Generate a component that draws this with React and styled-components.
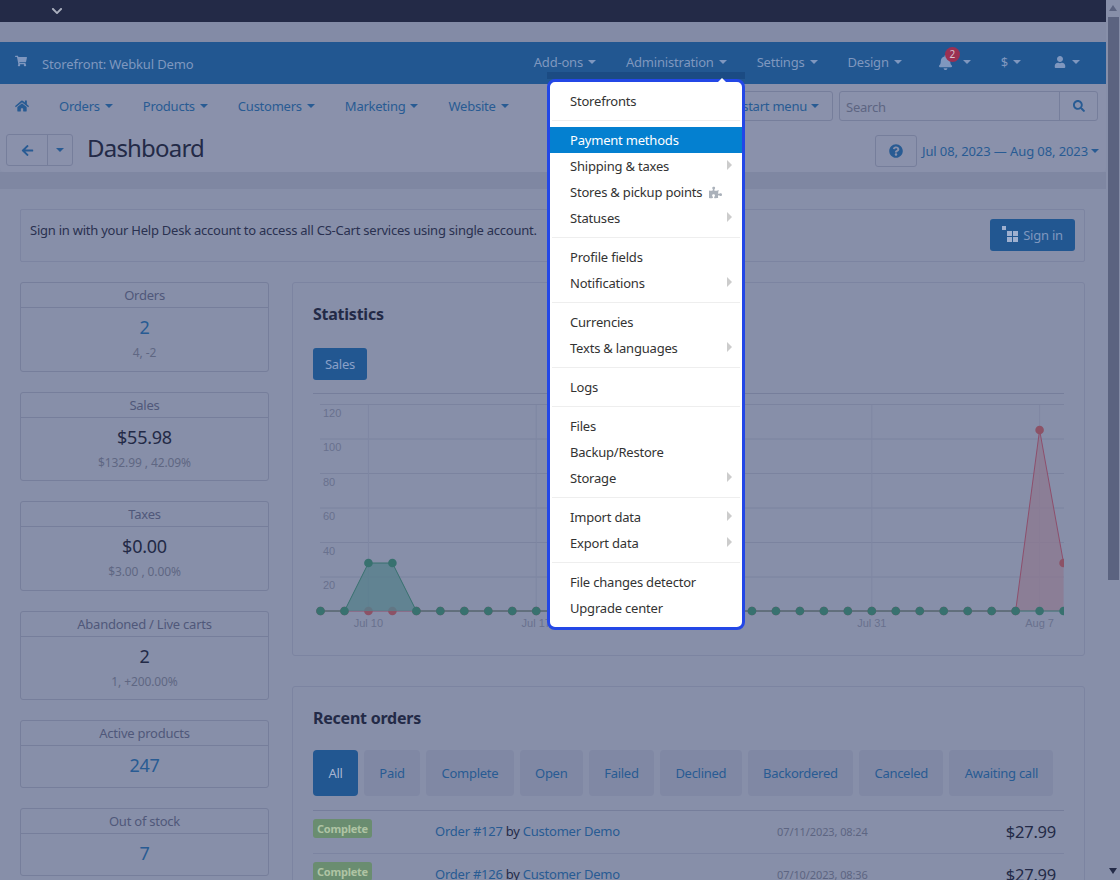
import React from 'react';
import styled, { createGlobalStyle } from 'styled-components';
import {
  FaArrowLeft, FaBell, FaChevronDown, FaHome, FaPuzzlePiece, FaQuestionCircle,
  FaSearch, FaShoppingCart, FaUser,
} from 'react-icons/fa';

const GlobalStyle = createGlobalStyle`
  html, body {
    margin: 0;
    height: 880px;
    overflow: hidden;
    background: #878fa9;
  }
  body, button, input {
    font-family: "Noto Sans", "Open Sans", sans-serif;
    font-size: 13px;
    letter-spacing: -0.24px;
  }
  * { box-sizing: border-box; }
`;

const Shell = styled.div`
  display: flex;
  height: 880px;
  overflow: hidden;
`;

const Page = styled.div`
  flex: 1;
  min-width: 0;
  overflow: hidden;
`;

const TopStrip = styled.div`
  height: 22px;
  padding-left: 51px;
  display: flex;
  align-items: center;
  background: #232a47;
  color: #a9aebd;
  font-size: 12px;
`;

const HeaderGap = styled.div`
  height: 20px;
  background: #838ba6;
`;

const BlueBar = styled.div`
  height: 42px;
  display: flex;
  align-items: center;
  padding: 0 26px 0 15px;
  background: #225791;
  color: #7f97bf;
`;

const Storefront = styled.div`
  display: flex;
  align-items: center;
  gap: 15px;
  margin-right: auto;
  letter-spacing: -0.15px;
  & > span { padding-top: 2px; }
  & > svg { margin-top: -5px; }
`;

const BarNav = styled.nav`
  display: flex;
  align-items: center;
  gap: 30px;
  margin-top: -2px;
  letter-spacing: -0.2px;
`;

const BarItem = styled.div`
  position: relative;
  display: flex;
  align-items: center;
  gap: 5px;
  margin-right: ${p => p.$extra || 0}px;
`;

const Caret = styled.i`
  display: inline-block;
  width: 0;
  height: 0;
  border-left: 4px solid transparent;
  border-right: 4px solid transparent;
  border-top: 4px solid currentColor;
  margin-left: ${p => p.$gap || 0}px;
`;

const CountBadge = styled.b`
  position: absolute;
  top: -8px;
  left: 7px;
  width: 15px;
  height: 15px;
  border-radius: 50%;
  background: #9a3052;
  color: #d8c4cf;
  font-size: 10px;
  font-weight: 400;
  text-align: center;
  line-height: 15px;
`;

const SubNav = styled.div`
  height: 44px;
  display: flex;
  align-items: center;
  padding: 0 8px 0 15px;
  background: #8a91ab;
  color: #285b93;
`;

const SubLinks = styled.nav`
  display: flex;
  align-items: center;
  gap: 30px;
  margin-right: auto;
`;

const SubItem = styled.div`
  display: flex;
  align-items: center;
  gap: 5px;
`;

const QuickButton = styled.div`
  height: 30px;
  display: flex;
  align-items: center;
  gap: 4px;
  padding: 0 13px;
  border: 1px solid #767e9b;
  border-radius: 3px;
  margin-right: 6px;
`;

const SearchBox = styled.div`
  width: 259px;
  height: 30px;
  display: flex;
  border: 1px solid #767e9b;
  border-radius: 3px;
`;

const SearchInput = styled.input`
  flex: 1;
  min-width: 0;
  border: 0;
  padding: 1px 6px 0;
  background: transparent;
  &::placeholder { color: #5d6582; opacity: 1; }
`;

const SearchButton = styled.div`
  width: 38px;
  display: flex;
  align-items: center;
  justify-content: center;
  border-left: 1px solid #767e9b;
  color: #285b93;
`;

const TitleRow = styled.div`
  height: 44px;
  display: flex;
  padding: 6px 7px 0 6px;
  background: #8a91ab;
  border-radius: 0 0 4px 4px;
`;

const BackGroup = styled.div`
  width: 67px;
  height: 32px;
  display: flex;
  border: 1px solid #767e9b;
  border-radius: 3px;
  color: #285b93;
`;

const BackPart = styled.div`
  flex: ${p => p.$grow || 0} 0 25px;
  display: flex;
  align-items: center;
  justify-content: center;
  & + & { border-left: 1px solid #767e9b; }
`;

const PageTitle = styled.h1`
  margin: 0 auto 0 14px;
  font-size: 24px;
  font-weight: 400;
  letter-spacing: -0.8px;
  line-height: 27px;
  color: #232a47;
`;

const HelpButton = styled.div`
  width: 42px;
  height: 32px;
  margin: 1px 5px 0 0;
  display: flex;
  align-items: center;
  justify-content: center;
  border: 1px solid #767e9b;
  border-radius: 3px;
  color: #285b93;
`;

const DateRange = styled.div`
  display: flex;
  align-items: center;
  gap: 3px;
  height: 32px;
  margin-top: 1px;
  letter-spacing: -0.1px;
  color: #285b93;
`;

const Band = styled.div`
  height: 17px;
  background: #7f87a2;
`;

const Main = styled.main`
  padding: 20px 21px 20px 20px;
  background: #878fa9;
`;

const Notice = styled.div`
  height: 53px;
  display: flex;
  align-items: center;
  justify-content: space-between;
  padding: 0 9px;
  border: 1px solid #7c84a1;
  border-radius: 2px;
  margin-bottom: 20px;
  color: #2a3150;
`;

const NoticeText = styled.span`
  padding-bottom: 11px;
`;

const SignIn = styled.div`
  width: 85px;
  height: 32px;
  margin-top: -1px;
  display: flex;
  align-items: center;
  justify-content: center;
  gap: 3px;
  background: #225791;
  border-radius: 3px;
  color: #7f97bf;
`;

const Columns = styled.div`
  display: flex;
  align-items: flex-start;
  gap: 23px;
`;

const LeftColumn = styled.aside`
  width: 249px;
  flex: none;
  display: flex;
  flex-direction: column;
  gap: 20px;
`;

const RightColumn = styled.div`
  flex: 1;
  min-width: 0;
  display: flex;
  flex-direction: column;
  gap: 30px;
`;

const Card = styled.section`
  border: 1px solid #767e9b;
  border-radius: 3px;
  text-align: center;
`;

const CardHead = styled.div`
  height: 25px;
  line-height: 24px;
  border-bottom: 1px solid #767e9b;
  color: #50587a;
`;

const CardBody = styled.div`
  height: ${p => (p.$short ? 41 : 62.5)}px;
  padding-top: 6px;
`;

const CardValue = styled.div`
  font-size: 18px;
  line-height: 26px;
  color: ${p => (p.$link ? '#285b93' : '#232a47')};
`;

const CardSub = styled.div`
  margin-top: 4px;
  font-size: 12px;
  letter-spacing: -0.1px;
  line-height: 17px;
  color: #5f6783;
`;

const Panel = styled.section`
  padding: 20px;
  border: 1px solid #7c84a1;
  border-radius: 3px;
`;

const PanelTitle = styled.h2`
  margin: 0 0 21px;
  font-size: 16px;
  font-weight: 700;
  line-height: 22px;
  color: #232a47;
`;

const SalesButton = styled.div`
  width: 54px;
  height: 32px;
  margin: 23px 0 13px;
  display: flex;
  align-items: center;
  justify-content: center;
  background: #225791;
  border-radius: 3px;
  color: #8aa0c8;
`;

const ChartBox = styled.div`
  border-top: 1px solid #767e9b;
  height: 242px;
  & > svg { display: block; }
`;

const ChartLabel = styled.text`
  font-family: "Liberation Sans", sans-serif;
  font-size: 11px;
  letter-spacing: 0;
  fill: #69718e;
`;

const Tabs = styled.div`
  display: flex;
  gap: 6px;
  padding-bottom: 14px;
  border-bottom: 1px solid #767e9b;
`;

const Tab = styled.div`
  height: 46px;
  display: flex;
  align-items: center;
  padding: 0 15.4px;
  border-radius: 4px;
  letter-spacing: -0.28px;
  background: ${p => (p.$active ? '#225791' : '#8088a4')};
  color: ${p => (p.$active ? '#a6b4d0' : '#285b93')};
`;

const OrderRow = styled.div`
  height: 43px;
  display: grid;
  grid-template-columns: 122px 342px 1fr auto;
  align-items: center;
  padding: 0 8px 2px 0;
  border-bottom: 1px solid #7c84a1;
  color: #232a47;
`;

const StatusBadge = styled.span`
  justify-self: start;
  align-self: start;
  margin-top: 8px;
  width: 59px;
  height: 19px;
  border-radius: 3px;
  background: #6a8d70;
  color: #afc4a4;
  font-size: 11px;
  font-weight: 700;
  text-align: center;
  line-height: 19px;
`;

const OrderLink = styled.span`
  color: #285b93;
`;

const OrderDate = styled.span`
  font-size: 11px;
  letter-spacing: -0.1px;
  color: #5d6582;
`;

const Price = styled.span`
  font-size: 16.5px;
  color: #232a47;
`;

const Scrollbar = styled.div`
  width: 14px;
  flex: none;
  display: flex;
  flex-direction: column;
  align-items: center;
  background: #878fa9;
`;

const ScrollArrow = styled.i`
  flex: none;
  width: 0;
  height: 0;
  margin: 5px 0 6px;
  border-left: 4px solid transparent;
  border-right: 4px solid transparent;
  ${p => (p.$down ? 'border-top: 6px solid #232a47; margin-top: auto;' : 'border-bottom: 6px solid #5b6380;')}
`;

const ScrollThumb = styled.div`
  width: 11px;
  height: 563px;
  background: #5b6380;
`;

const Menu = styled.div`
  position: absolute;
  top: 79px;
  left: 547px;
  width: 198px;
  padding: 6px 0;
  background: #fff;
  border: 3px solid #2347e6;
  border-radius: 8px;
  color: #333;
  letter-spacing: -0.2px;
  &::before {
    content: "";
    position: absolute;
    top: -10px;
    left: -3px;
    right: -3px;
    height: 7px;
    background: #1b4b83;
  }
  &::after {
    content: "";
    position: absolute;
    top: -4px;
    left: 168px;
    border-left: 4px solid transparent;
    border-right: 4px solid transparent;
    border-bottom: 4px solid #fff;
  }
`;

const MenuItem = styled.div`
  height: 26px;
  display: flex;
  align-items: center;
  gap: 7px;
  padding: 0 10px 0 20px;
  background: ${p => (p.$active ? '#0480d0' : 'transparent')};
  color: ${p => (p.$active ? '#fff' : '#333')};
`;

const SubArrow = styled.i`
  margin-left: auto;
  margin-top: -2px;
  border-top: 5px solid transparent;
  border-bottom: 5px solid transparent;
  border-left: 5px solid #ccc;
`;

const MenuDivider = styled.div`
  height: 1px;
  margin: 6px 2px;
  background: #eee;
`;

const menuGroups = [
  [{ label: 'Storefronts' }],
  [
    { label: 'Payment methods', active: true },
    { label: 'Shipping & taxes', sub: true },
    { label: 'Stores & pickup points', addon: true },
    { label: 'Statuses', sub: true },
  ],
  [{ label: 'Profile fields' }, { label: 'Notifications', sub: true }],
  [{ label: 'Currencies' }, { label: 'Texts & languages', sub: true }],
  [{ label: 'Logs' }],
  [{ label: 'Files' }, { label: 'Backup/Restore' }, { label: 'Storage', sub: true }],
  [{ label: 'Import data', sub: true }, { label: 'Export data', sub: true }],
  [{ label: 'File changes detector' }, { label: 'Upgrade center' }],
];

const barLinks = [
  { label: 'Add-ons' },
  { label: 'Administration' },
  { label: 'Settings' },
  { label: 'Design', extra: 6 },
];
const subLinks = ['Orders', 'Products', 'Customers', 'Marketing', 'Website'];
const tabs = ['All', 'Paid', 'Complete', 'Open', 'Failed', 'Declined', 'Backordered', 'Canceled', 'Awaiting call'];

const stats = [
  { title: 'Orders', value: '2', sub: '4, -2', link: true },
  { title: 'Sales', value: '$55.98', sub: '$132.99 , 42.09%' },
  { title: 'Taxes', value: '$0.00', sub: '$3.00 , 0.00%' },
  { title: 'Abandoned / Live carts', value: '2', sub: '1, +200.00%' },
  { title: 'Active products', value: '247', link: true },
  { title: 'Out of stock', value: '7', link: true },
];

const orders = [
  { id: 127, date: '07/11/2023, 08:24' },
  { id: 126, date: '07/10/2023, 08:36' },
];

const BASE = 611;
const px = i => 320.5 + i * 23.97;
const green = Array.from({ length: 32 }, (_, i) => (i === 2 || i === 3 ? 563 : BASE));
const red = Array.from({ length: 32 }, (_, i) => (i === 30 ? 430 : i === 31 ? 563 : BASE));
const toLine = ys => ys.map((y, i) => `${px(i)},${y}`).join(' ');

function Chart() {
  return (
    <svg width="751" height="241" viewBox="313 394 751 241">
      {[404.5, 439, 473.5, 508, 542.5, 577].map(y => (
        <line key={y} x1="320" x2="1064" y1={y} y2={y} stroke="#7b839f" />
      ))}
      {[2, 9, 16, 23, 30].map(i => (
        <line key={i} x1={px(i)} x2={px(i)} y1="405" y2="611" stroke="#7f87a3" />
      ))}
      {[['120', 417], ['100', 451], ['80', 486], ['60', 520], ['40', 555], ['20', 589]].map(([t, y]) => (
        <ChartLabel key={t} x="323" y={y}>{t}</ChartLabel>
      ))}
      {[['Jul 10', 2], ['Jul 17', 9], ['Jul 31', 23], ['Aug 7', 30]].map(([t, i]) => (
        <ChartLabel key={t} x={px(i)} y="627" textAnchor="middle">{t}</ChartLabel>
      ))}
      <polygon points={`${px(29)},${BASE} ${px(30)},430 ${px(31)},563 ${px(31)},${BASE}`} fill="#8c7890" fillOpacity="0.75" />
      <polyline points={toLine(red)} fill="none" stroke="#8e4f6c" />
      {red.map((y, i) => <circle key={i} cx={px(i)} cy={y} r="4.3" fill="#8c5266" />)}
      <polygon points={`${px(1)},${BASE} ${px(2)},563 ${px(3)},563 ${px(4)},${BASE}`} fill="#58808c" fillOpacity="0.8" />
      <polyline points={toLine(green)} fill="none" stroke="#38716f" />
      {green.map((y, i) => <circle key={i} cx={px(i)} cy={y} r="4.3" fill="#38716f" />)}
    </svg>
  );
}

function SignInIcon() {
  return (
    <svg width="18" height="18" viewBox="0 0 18 18" fill="#9fb0cf">
      <rect x="0" y="0" width="4" height="4" />
      <rect x="5" y="5" width="5" height="5" />
      <rect x="11" y="5" width="5" height="5" />
      <rect x="5" y="11" width="5" height="5" />
      <rect x="11" y="11" width="5" height="5" />
    </svg>
  );
}

export default function App() {
  return (
    <>
      <GlobalStyle />
      <Shell>
        <Page>
          <TopStrip><FaChevronDown /></TopStrip>
          <HeaderGap />
          <BlueBar>
            <Storefront>
              <FaShoppingCart size={12} />
              <span>Storefront: Webkul Demo</span>
            </Storefront>
            <BarNav>
              {barLinks.map(link => (
                <BarItem key={link.label} $extra={link.extra}>{link.label}<Caret /></BarItem>
              ))}
              <BarItem>
                <FaBell size={15} />
                <CountBadge>2</CountBadge>
                <Caret $gap={5} />
              </BarItem>
              <BarItem $extra={3}>$<Caret /></BarItem>
              <BarItem><FaUser size={12} /><Caret $gap={1} /></BarItem>
            </BarNav>
          </BlueBar>
          <SubNav>
            <SubLinks>
              <FaHome size={14} />
              {subLinks.map(link => (
                <SubItem key={link}>{link}<Caret /></SubItem>
              ))}
            </SubLinks>
            <QuickButton>Quick start menu<Caret /></QuickButton>
            <SearchBox>
              <SearchInput placeholder="Search" readOnly />
              <SearchButton><FaSearch size={12} /></SearchButton>
            </SearchBox>
          </SubNav>
          <TitleRow>
            <BackGroup>
              <BackPart $grow={1}><FaArrowLeft size={13} /></BackPart>
              <BackPart><Caret /></BackPart>
            </BackGroup>
            <PageTitle>Dashboard</PageTitle>
            <HelpButton><FaQuestionCircle size={14} /></HelpButton>
            <DateRange>Jul 08, 2023 — Aug 08, 2023<Caret /></DateRange>
          </TitleRow>
          <Band />
          <Main>
            <Notice>
              <NoticeText>Sign in with your Help Desk account to access all CS-Cart services using single account.</NoticeText>
              <SignIn><SignInIcon />Sign in</SignIn>
            </Notice>
            <Columns>
              <LeftColumn>
                {stats.map(s => (
                  <Card key={s.title}>
                    <CardHead>{s.title}</CardHead>
                    <CardBody $short={!s.sub}>
                      <CardValue $link={s.link}>{s.value}</CardValue>
                      {s.sub && <CardSub>{s.sub}</CardSub>}
                    </CardBody>
                  </Card>
                ))}
              </LeftColumn>
              <RightColumn>
                <Panel>
                  <PanelTitle>Statistics</PanelTitle>
                  <SalesButton>Sales</SalesButton>
                  <ChartBox><Chart /></ChartBox>
                </Panel>
                <Panel>
                  <PanelTitle>Recent orders</PanelTitle>
                  <Tabs>
                    {tabs.map((t, i) => <Tab key={t} $active={i === 0}>{t}</Tab>)}
                  </Tabs>
                  {orders.map(o => (
                    <OrderRow key={o.id}>
                      <StatusBadge>Complete</StatusBadge>
                      <span>
                        <OrderLink>Order #{o.id}</OrderLink> by <OrderLink>Customer Demo</OrderLink>
                      </span>
                      <OrderDate>{o.date}</OrderDate>
                      <Price>$27.99</Price>
                    </OrderRow>
                  ))}
                </Panel>
              </RightColumn>
            </Columns>
          </Main>
        </Page>
        <Scrollbar>
          <ScrollArrow />
          <ScrollThumb />
          <ScrollArrow $down />
        </Scrollbar>
      </Shell>
      <Menu>
        {menuGroups.map((group, g) => (
          <React.Fragment key={g}>
            {g > 0 && <MenuDivider />}
            {group.map(item => (
              <MenuItem key={item.label} $active={item.active}>
                {item.label}
                {item.addon && <FaPuzzlePiece size={13} color="#aab1ba" />}
                {item.sub && <SubArrow />}
              </MenuItem>
            ))}
          </React.Fragment>
        ))}
      </Menu>
    </>
  );
}
